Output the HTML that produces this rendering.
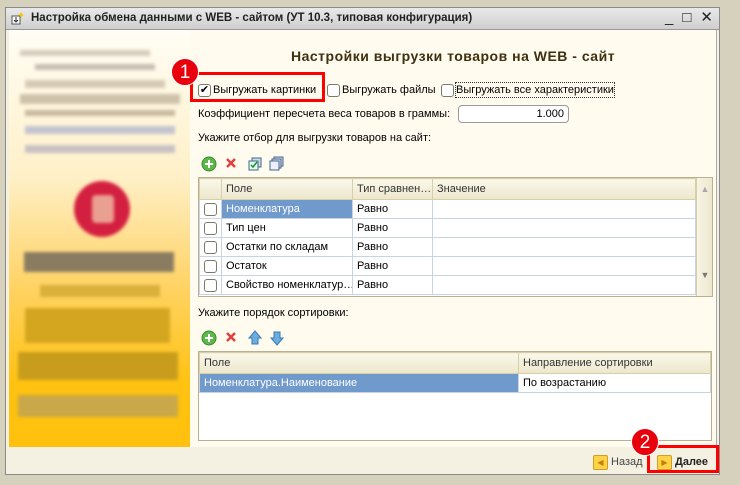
<!DOCTYPE html>
<html><head><meta charset="utf-8"><style>
*{margin:0;padding:0;box-sizing:border-box}
body{width:740px;height:485px;background:#d6d1bd;font-family:"Liberation Sans","DejaVu Sans",sans-serif;font-size:11px;color:#000;position:relative;overflow:hidden}
.a{position:absolute}
.win{left:5px;top:7px;width:715px;height:468px;background:#f4f1e2;border:1px solid #8a8a8a}
.title{left:6px;top:8px;width:713px;height:22px;background:linear-gradient(#e9e9e9,#cfcfcf);border-bottom:1px solid #999}
.left{left:9px;top:30px;width:181px;height:417px;background:linear-gradient(#fffdf5 0%,#fff0c8 35%,#ffd46a 60%,#ffc210 85%,#ffc10e 100%)}
.content{left:190px;top:30px;width:527px;height:417px;background:#fffbee;border-right:1px solid #aaa}
.bl{filter:blur(1.5px)}
.cb{width:13px;height:13px;border:1px solid #7a7a6a;border-radius:3px;background:#fff}
table{border-collapse:collapse;font-size:11px}
td{border:1px solid #c8d4e4;height:19px;padding:0 4px;white-space:nowrap;overflow:hidden}
.hd td{background:linear-gradient(#fbf8ea,#ece6cc);border-color:#d6cfa8;color:#333;height:21px}
.sel{background:#7099cc;color:#fff}
.badge{width:28px;height:28px;border-radius:50%;background:#e8000c;color:#fff;font-size:19px;text-align:center;line-height:28px;border:1px solid #fff}
.red{border:3px solid #f00}
</style></head><body>
<div class="a win"></div>
<div class="a title"></div>
<div class="a" style="left:11px;top:11px;width:14px;height:14px"><svg width="14" height="14"><rect x="1" y="5" width="8" height="8" fill="#fff" stroke="#555"/><path d="M5 6v5M3 9l2 2 2-2" stroke="#333" fill="none"/><path d="M10 1l1 2 2 1-2 1-1 2-1-2-2-1 2-1z" fill="#f5c400"/></svg></div>
<div class="a" style="left:31px;top:12px;font-size:11.5px;font-weight:bold;color:#222">Настройка обмена данными с WEB - сайтом (УТ 10.3, типовая конфигурация)</div>
<div class="a" style="left:665px;top:8px;font-size:15px;color:#222;letter-spacing:9px">_□✕</div>
<div class="a left"></div>
<div class="a bl" style="left:20px;top:50px;width:160px;height:100px">
<div class="a" style="left:0;top:0;width:130px;height:6px;background:#d8ccbc"></div>
<div class="a" style="left:15px;top:14px;width:120px;height:6px;background:#c8beb4"></div>
<div class="a" style="left:5px;top:30px;width:140px;height:8px;background:#d6cab4"></div>
<div class="a" style="left:0;top:44px;width:160px;height:10px;background:#cfc2aa"></div>
<div class="a" style="left:5px;top:60px;width:150px;height:6px;background:#c8b8a0"></div>
<div class="a" style="left:5px;top:76px;width:150px;height:8px;background:#c4c4d0"></div>
<div class="a" style="left:5px;top:95px;width:150px;height:8px;background:#c8c2c4"></div>
</div>
<div class="a bl" style="left:74px;top:181px;width:56px;height:56px;border-radius:50%;background:#d42040"></div>
<div class="a bl" style="left:92px;top:195px;width:22px;height:28px;border-radius:4px;background:#eaa090"></div>
<div class="a bl" style="left:24px;top:252px;width:150px;height:20px;background:#8a7c60"></div>
<div class="a bl" style="left:40px;top:285px;width:120px;height:12px;background:#d8b03a"></div>
<div class="a bl" style="left:25px;top:308px;width:145px;height:35px;background:#d4a620"></div>
<div class="a bl" style="left:18px;top:352px;width:160px;height:28px;background:#c89c1c"></div>
<div class="a bl" style="left:18px;top:395px;width:160px;height:22px;background:#c8a848"></div>
<div class="a content"></div>
<div class="a" style="left:291px;top:48px;font-size:14px;letter-spacing:0.5px;font-weight:bold;color:#3e3010">Настройки выгрузки товаров на WEB - сайт</div>
<div class="a cb" style="left:198px;top:84px;font-size:11px;line-height:11px;text-align:center">✔</div>
<div class="a" style="left:213px;top:84px">Выгружать картинки</div>
<div class="a cb" style="left:327px;top:84px"></div>
<div class="a" style="left:342px;top:84px">Выгружать файлы</div>
<div class="a cb" style="left:441px;top:84px"></div>
<div class="a" style="left:455px;top:82px;border:1px dotted #333;padding:1px 0">Выгружать все характеристики</div>
<div class="a" style="left:198px;top:108px">Коэффициент пересчета веса товаров в граммы:</div>
<div class="a" style="left:458px;top:105px;width:111px;height:18px;border:1px solid #999;border-radius:4px;background:#fff;text-align:right;padding:2px 4px">1.000</div>
<div class="a" style="left:198px;top:132px">Укажите отбор для выгрузки товаров на сайт:</div>
<svg class="a" style="left:200px;top:155px" width="90" height="18"><circle cx="9" cy="9" r="7" fill="#5cb848" stroke="#3a8a30"/><path d="M9 5v8M5 9h8" stroke="#fff" stroke-width="2"/><path d="M27 4l8 8M35 4l-8 8" stroke="#e04040" stroke-width="2.5"/><rect x="52" y="3" width="9" height="9" fill="#cde" stroke="#468"/><rect x="49" y="6" width="9" height="9" fill="#dfe" stroke="#468"/><path d="M51 10l2 2 4-5" stroke="#2a8a2a" stroke-width="1.5" fill="none"/><rect x="74" y="2" width="9" height="9" fill="#cde" stroke="#468"/><rect x="72" y="4" width="9" height="9" fill="#dde" stroke="#468"/><rect x="70" y="6" width="9" height="9" fill="#eef" stroke="#468"/></svg>
<div class="a" style="left:198px;top:177px;width:515px;height:120px;border:1px solid #b8b090;background:#fff;overflow:hidden">
<table style="width:497px;table-layout:fixed">
<colgroup><col style="width:22px"><col style="width:131px"><col style="width:80px"><col></colgroup>
<tr class="hd"><td></td><td>Поле</td><td>Тип сравнен…</td><td>Значение</td></tr>
<tr><td><div class="cb"></div></td><td class="sel">Номенклатура</td><td>Равно</td><td></td></tr>
<tr><td><div class="cb"></div></td><td>Тип цен</td><td>Равно</td><td></td></tr>
<tr><td><div class="cb"></div></td><td>Остатки по складам</td><td>Равно</td><td></td></tr>
<tr><td><div class="cb"></div></td><td>Остаток</td><td>Равно</td><td></td></tr>
<tr><td><div class="cb"></div></td><td>Свойство номенклатур…</td><td>Равно</td><td></td></tr>
</table>
<div class="a" style="left:497px;top:0;width:17px;height:118px;background:linear-gradient(90deg,#f8f4e4,#ece6cc);border-left:1px solid #d6cfa8;color:#aaa;font-size:9px;text-align:center"><div style="margin-top:6px">▲</div><div style="margin-top:76px;color:#777">▼</div></div>
</div>
<div class="a" style="left:198px;top:307px">Укажите порядок сортировки:</div>
<svg class="a" style="left:200px;top:329px" width="90" height="18"><circle cx="9" cy="9" r="7" fill="#5cb848" stroke="#3a8a30"/><path d="M9 5v8M5 9h8" stroke="#fff" stroke-width="2"/><path d="M27 4l8 8M35 4l-8 8" stroke="#e04040" stroke-width="2.5"/><path d="M55 2l6 7h-3v6h-6v-6h-3z" fill="#6aaee0" stroke="#3a7ab0"/><path d="M77 16l6-7h-3v-6h-6v6h-3z" fill="#6aaee0" stroke="#3a7ab0"/></svg>
<div class="a" style="left:198px;top:351px;width:514px;height:90px;border:1px solid #b8b090;background:#fff;overflow:hidden">
<table style="width:512px;table-layout:fixed">
<colgroup><col style="width:319px"><col></colgroup>
<tr class="hd"><td>Поле</td><td>Направление сортировки</td></tr>
<tr><td class="sel">Номенклатура.Наименование</td><td>По возрастанию</td></tr>
</table></div>
<div class="a" style="left:593px;top:455px;width:15px;height:15px;background:#ffd24a;border:1px solid #d0a020;border-radius:2px;color:#c08000;font-size:8px;line-height:13px;text-align:center">◀</div>
<div class="a" style="left:611px;top:456px;color:#444">Назад</div>
<div class="a" style="left:657px;top:455px;width:15px;height:15px;background:#ffd24a;border:1px solid #d0a020;border-radius:2px;color:#c08000;font-size:8px;line-height:13px;text-align:center">▶</div>
<div class="a" style="left:675px;top:456px;font-weight:bold;color:#222">Далее</div>
<div class="a red" style="left:190px;top:72px;width:135px;height:30px"></div>
<div class="a badge" style="left:171px;top:58px">1</div>
<div class="a red" style="left:647px;top:445px;width:72px;height:28px"></div>
<div class="a badge" style="left:631px;top:428px">2</div>
</body></html>
